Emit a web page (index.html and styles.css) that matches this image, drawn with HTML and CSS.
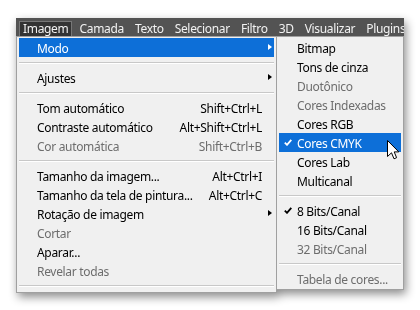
FILE: index.html
```html
<!DOCTYPE html>
<html lang="pt">
<head>
<meta charset="utf-8">
<link rel="stylesheet" href="styles.css">
</head>
<body>
<div class="screen">
  <div class="menus">
    <nav class="menubar">
      <span class="mb-item active">Imagem</span>
      <span class="mb-item">Camada</span>
      <span class="mb-item">Texto</span>
      <span class="mb-item">Selecionar</span>
      <span class="mb-item">Filtro</span>
      <span class="mb-item">3D</span>
      <span class="mb-item">Visualizar</span>
      <span class="mb-item">Plugins</span>
    </nav>
    <div class="dropdowns">
      <ul class="menu main">
        <li class="item hl"><span class="label">Modo</span><span class="key"></span><span class="sub-arrow"></span></li>
        <li class="sep"></li>
        <li class="item"><span class="label">Ajustes</span><span class="key"></span><span class="sub-arrow"></span></li>
        <li class="sep"></li>
        <li class="item"><span class="label">Tom automático</span><span class="key">Shift+Ctrl+L</span><span class="no-arrow"></span></li>
        <li class="item"><span class="label">Contraste automático</span><span class="key">Alt+Shift+Ctrl+L</span><span class="no-arrow"></span></li>
        <li class="item off"><span class="label">Cor automática</span><span class="key">Shift+Ctrl+B</span><span class="no-arrow"></span></li>
        <li class="sep"></li>
        <li class="item"><span class="label">Tamanho da imagem...</span><span class="key">Alt+Ctrl+I</span><span class="no-arrow"></span></li>
        <li class="item"><span class="label">Tamanho da tela de pintura...</span><span class="key">Alt+Ctrl+C</span><span class="no-arrow"></span></li>
        <li class="item"><span class="label">Rotação de imagem</span><span class="key"></span><span class="sub-arrow"></span></li>
        <li class="item off"><span class="label">Cortar</span><span class="key"></span><span class="no-arrow"></span></li>
        <li class="item"><span class="label">Aparar...</span><span class="key"></span><span class="no-arrow"></span></li>
        <li class="item off"><span class="label">Revelar todas</span><span class="key"></span><span class="no-arrow"></span></li>
        <li class="sep"></li>
      </ul>
      <ul class="menu sub">
        <li class="item"><span class="check"></span><span class="label">Bitmap</span></li>
        <li class="item"><span class="check"></span><span class="label">Tons de cinza</span></li>
        <li class="item off"><span class="check"></span><span class="label">Duotônico</span></li>
        <li class="item off"><span class="check"></span><span class="label">Cores Indexadas</span></li>
        <li class="item"><span class="check"></span><span class="label">Cores RGB</span></li>
        <li class="item hl"><span class="check"><svg viewBox="0 0 8 7" width="8" height="7"><polyline points="0.8,3.6 3,5.8 7.3,0.8" fill="none" stroke="currentColor" stroke-width="1.8"/></svg></span><span class="label">Cores CMYK</span></li>
        <li class="item"><span class="check"></span><span class="label">Cores Lab</span></li>
        <li class="item"><span class="check"></span><span class="label">Multicanal</span></li>
        <li class="sep"></li>
        <li class="item"><span class="check"><svg viewBox="0 0 8 7" width="8" height="7"><polyline points="0.8,3.6 3,5.8 7.3,0.8" fill="none" stroke="currentColor" stroke-width="1.8"/></svg></span><span class="label">8 Bits/Canal</span></li>
        <li class="item"><span class="check"></span><span class="label">16 Bits/Canal</span></li>
        <li class="item off"><span class="check"></span><span class="label">32 Bits/Canal</span></li>
        <li class="sep"></li>
        <li class="item off"><span class="check"></span><span class="label">Tabela de cores...</span></li>
      </ul>
    </div>
  </div>
  <svg class="cursor" viewBox="0 0 12 20" width="12" height="20"><path d="M0.5,0.5 L0.5,16.5 L4.5,12.8 L7,18.8 L9.6,17.7 L7.2,11.9 L11.8,11.9 Z" fill="#fff" stroke="#000" stroke-width="1" stroke-linejoin="round"/></svg>
</div>
</body>
</html>
```
FILE: styles.css
```css
* { box-sizing: border-box; }
html, body { margin: 0; padding: 0; background: #fff; }
.screen {
  position: relative;
  width: 420px;
  height: 310px;
  overflow: hidden;
  padding: 18px 0 0 16px;
  font-family: "Noto Sans", "Open Sans", sans-serif;
  font-size: 12px;
  letter-spacing: -0.32px;
}
.menus {
  width: 388px;
  filter: drop-shadow(2px 4px 5px rgba(0,0,0,0.45));
}
.menubar {
  display: flex;
  height: 18px;
  padding-left: 3px;
  background: #535353;
  overflow: hidden;
  white-space: nowrap;
}
.mb-item {
  height: 15px;
  margin-top: 3px;
  margin-right: 3px;
  padding: 0 3px 0 3px;
  border: 1px solid transparent;
  border-bottom: 0;
  color: #f2f2f2;
  line-height: 14px;
}
.mb-item.active {
  background: #333;
  border-color: #777;
}
.dropdowns {
  display: flex;
  align-items: flex-start;
}
.menu {
  list-style: none;
  margin: 0;
  padding: 1px 2px;
  background: #f0f0f0;
  border: 1px solid #a0a0a0;
}
.main { width: 261px; }
.sub { width: 128px; margin-left: -1px; }
.item {
  display: flex;
  align-items: center;
  height: 19px;
  padding-top: 1px;
  color: #000;
  white-space: nowrap;
}
.main .item { padding-left: 18px; }
.item.off { color: #6d6d6d; }
.item.hl { background: #0d6fd8; color: #fff; }
.label { flex: 1; }
.key { text-align: right; }
.sub-arrow, .no-arrow { width: 12px; height: 7px; flex: none; position: relative; margin-top: -1px; }
.sub-arrow::after {
  content: "";
  position: absolute;
  left: 6px;
  top: 0;
  border-left: 4px solid currentColor;
  border-top: 3.5px solid transparent;
  border-bottom: 3.5px solid transparent;
}
.check {
  width: 18px;
  flex: none;
  display: flex;
  align-items: center;
  padding-left: 5px;
  margin-top: -1px;
}
.check svg { display: block; }
.sep {
  height: 0;
  margin: 5px 0 4px;
  border-top: 1px solid #c8c8c8;
  border-bottom: 1px solid #fff;
}
.cursor {
  position: absolute;
  left: 387px;
  top: 140px;
}
```
